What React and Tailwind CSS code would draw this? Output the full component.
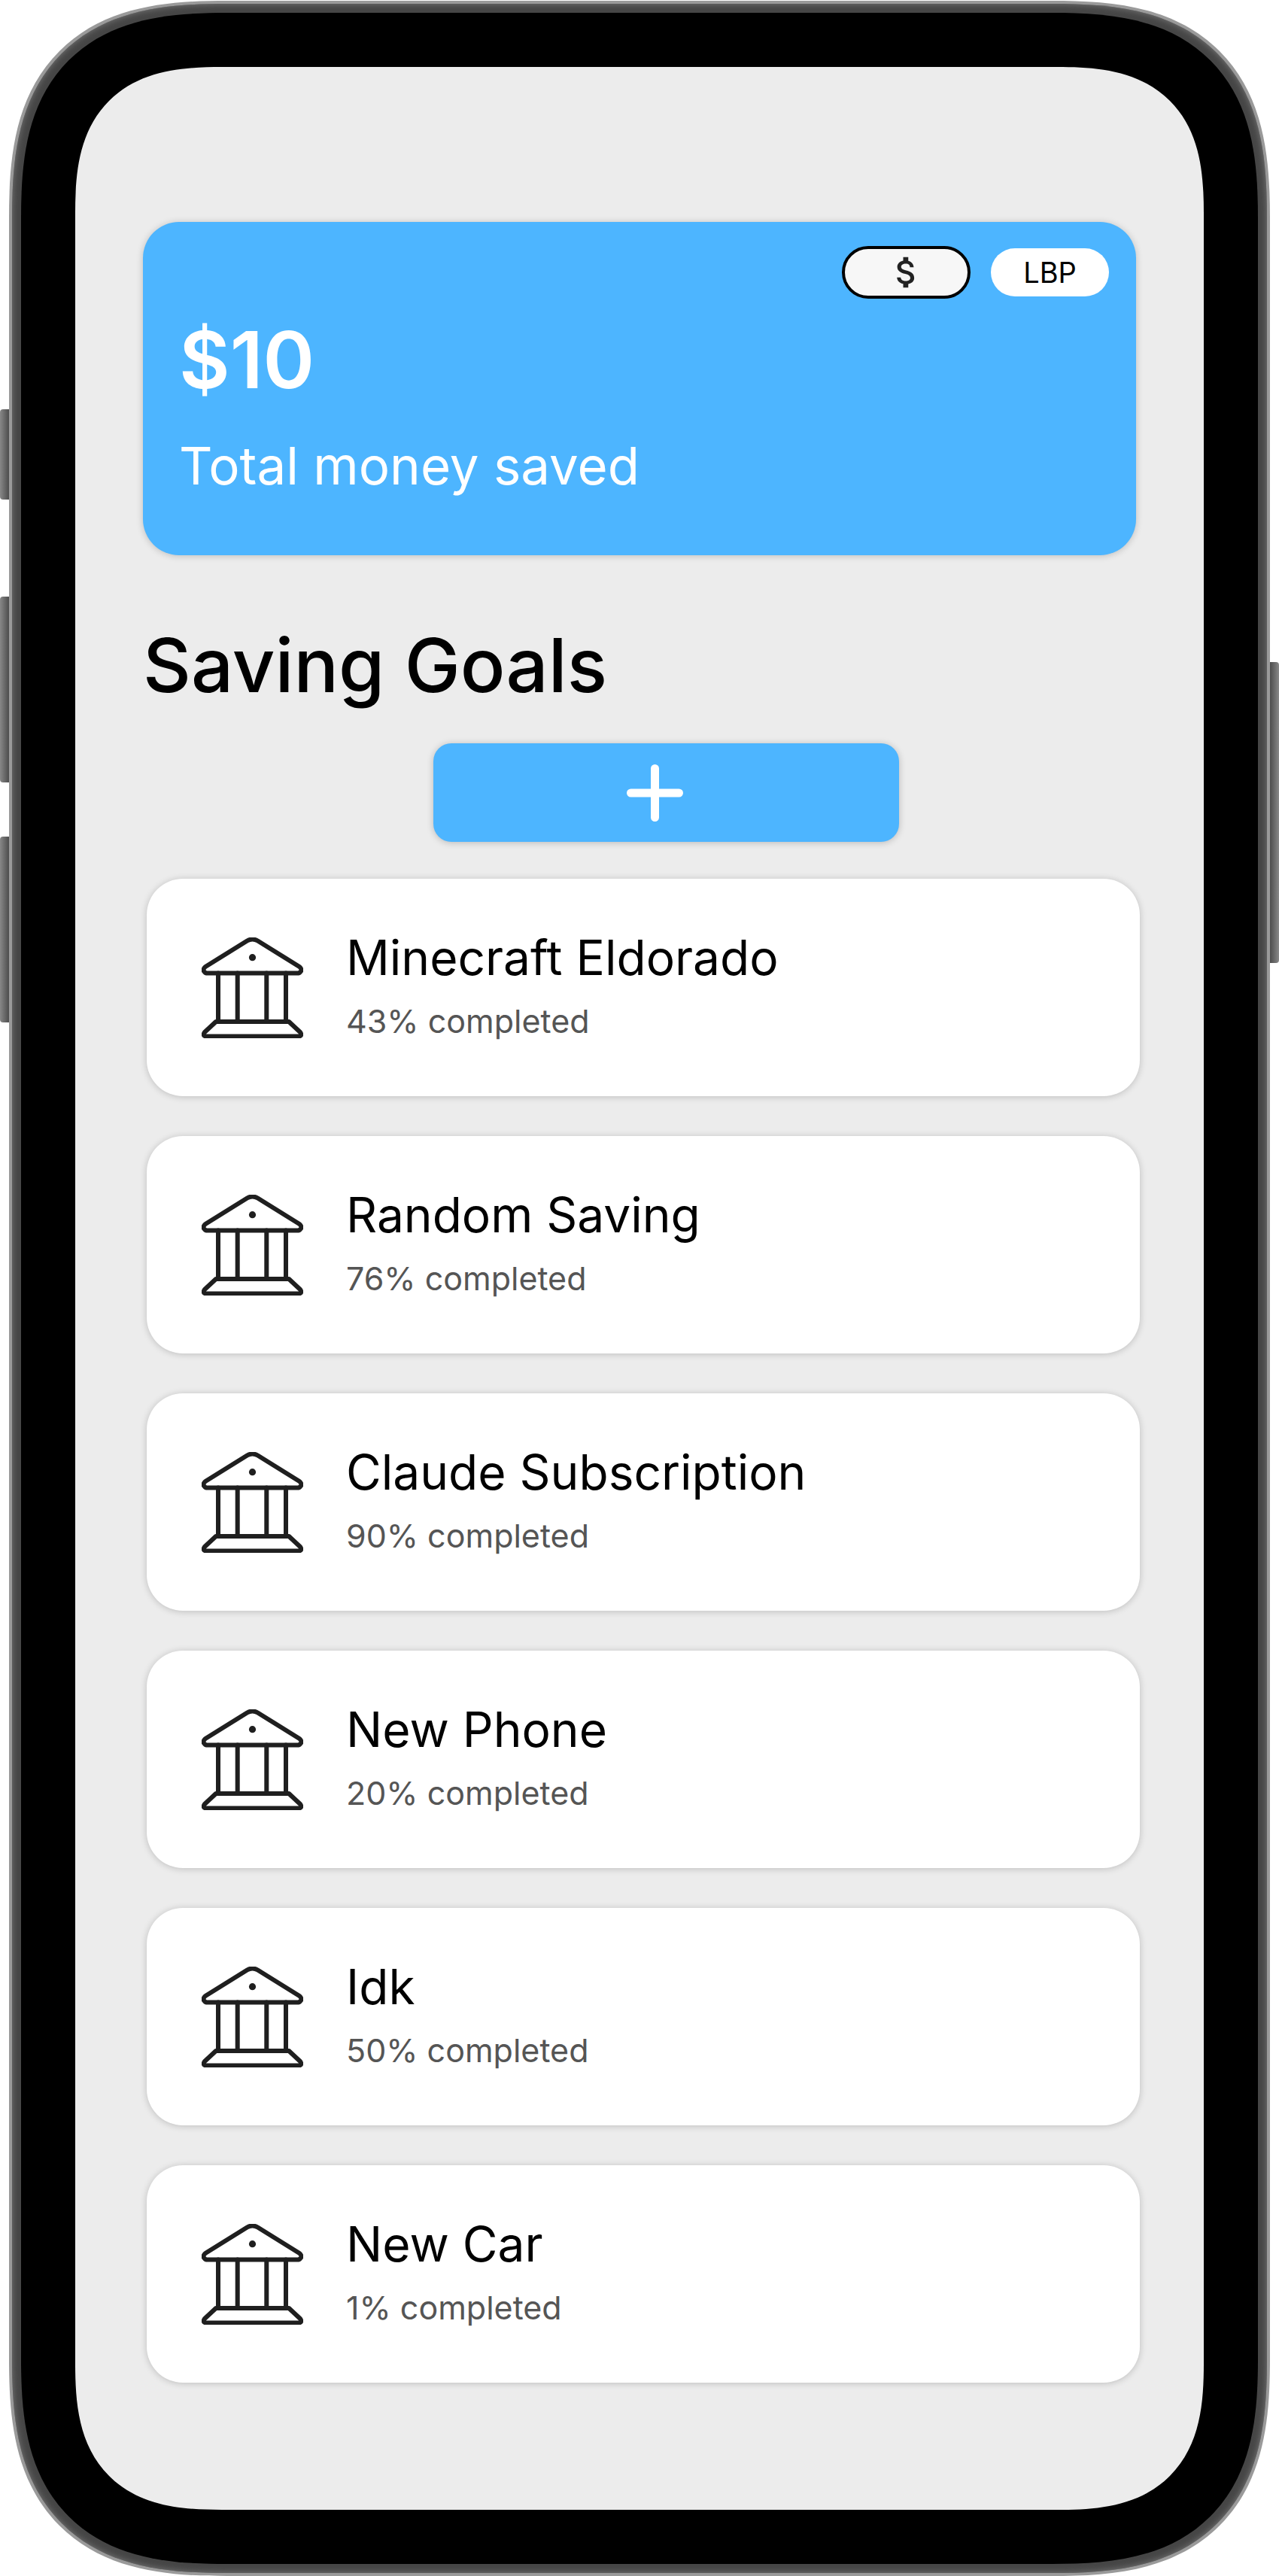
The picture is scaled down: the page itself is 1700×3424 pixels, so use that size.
import React from 'react';
import { MdAttachMoney } from 'react-icons/md';

const GOALS = [
    { name: 'Minecraft Eldorado', pct: 43 },
    { name: 'Random Saving', pct: 76 },
    { name: 'Claude Subscription', pct: 90 },
    { name: 'New Phone', pct: 20 },
    { name: 'Idk', pct: 50 },
    { name: 'New Car', pct: 1 },
];

function BankIcon() {
    return (
        <svg width="135" height="134" viewBox="0 0 135 134" fill="none" stroke="#1f1f1f" strokeWidth="6" strokeLinejoin="round" strokeLinecap="round" className="shrink-0">
            <path d="M60.5 4.5 Q67.5 0.5 74.5 4.5 L130 39 Q134.5 43 131 46 Q130 47.5 127 47.5 L8 47.5 Q5 47.5 4 46 Q0.5 43 5 39 Z" />
            <path d="M22 47.5 V112 M47.7 47.5 V112 M86.3 47.5 V112 M112 47.5 V112" />
            <path d="M19 112 L116 112 L131 126 Q134.5 131 129 131.5 L6 131.5 Q0.5 131 4 126 Z" />
            <circle cx="67.5" cy="26.7" r="4.6" fill="#1f1f1f" stroke="none" />
        </svg>
    );
}

function GoalCard({ name, pct }) {
    return (
        <div className="ml-[5px] flex h-[289px] w-[1320px] items-center rounded-[48px] bg-white pl-[73px] shadow-[0_1px_10px_rgba(0,0,0,0.2)]">
            <BankIcon />
            <div className="ml-[57px] flex flex-col pb-[8px]">
                <span className="text-[64px] font-normal leading-[78px] text-black">{name}</span>
                <span className="mt-[18px] text-[43px] font-normal leading-[54px] text-[#555555]">{pct}% completed</span>
            </div>
        </div>
    );
}

export default function App() {
    return (
        <div className="relative h-[3424px] w-[1700px] overflow-hidden bg-white font-['Inter',sans-serif]">
            {/* Side buttons */}
            <div className="absolute left-0 top-[544px] h-[120px] w-[14px] rounded-l-[4px] bg-gradient-to-r from-[#888888] to-[#444444]" />
            <div className="absolute left-0 top-[793px] h-[247px] w-[14px] rounded-l-[4px] bg-gradient-to-r from-[#888888] to-[#444444]" />
            <div className="absolute left-0 top-[1112px] h-[247px] w-[14px] rounded-l-[4px] bg-gradient-to-r from-[#888888] to-[#444444]" />
            <div className="absolute right-0 top-[880px] h-[400px] w-[14px] rounded-r-[4px] bg-gradient-to-r from-[#444444] to-[#888888]" />

            {/* Phone frame */}
            <div className="relative ml-[12px] mt-[1px] h-[3423px] w-[1676px] rounded-[290px] bg-[#9a9a9a] p-[4px] [corner-shape:superellipse(1.4)]">
                <div className="h-full w-full rounded-[286px] bg-[#464646] p-[12px] shadow-[inset_0_0_8px_#7a7a7a] [corner-shape:superellipse(1.4)]">
                    <div className="h-full w-full rounded-[274px] bg-black p-[72px] [corner-shape:superellipse(1.4)]">
                        {/* Screen */}
                        <div className="flex h-full w-full flex-col rounded-[195px] bg-[#ececec] pl-[90px] pr-[85px] pt-[206px] [corner-shape:superellipse(1.4)]">
                            {/* Balance card */}
                            <div className="flex h-[443px] w-[1320px] shrink-0 flex-col rounded-[48px] bg-[#4db5ff] pl-[49px] pr-[36px] pt-[32px] shadow-[0_1px_10px_rgba(0,0,0,0.2)]">
                                <div className="flex items-center justify-end gap-[27px]">
                                    <div className="flex h-[70px] w-[171px] items-center justify-center rounded-full border-[4px] border-black bg-[#f7f7f7] text-[#222222]">
                                        <MdAttachMoney size={54} />
                                    </div>
                                    <div className="flex h-[64px] w-[157px] items-center justify-center rounded-full bg-white text-[38px] font-normal text-black">
                                        LBP
                                    </div>
                                </div>
                                <span className="-ml-[1px] mt-[18px] text-[104px] font-semibold leading-[126px] text-white">$10</span>
                                <span className="-ml-[1px] mt-[37px] text-[69px] font-normal leading-[82px] text-white">Total money saved</span>
                            </div>

                            <h1 className="mt-[85px] text-[99px] font-medium leading-[122px] text-black">Saving Goals</h1>

                            <button className="ml-[386px] mt-[43px] flex h-[131px] w-[619px] shrink-0 items-center justify-center rounded-[24px] bg-[#4db5ff] pr-[30px] shadow-[0_1px_10px_rgba(0,0,0,0.22)]">
                                <svg width="75" height="76" viewBox="0 0 75 76" fill="none" stroke="white" strokeWidth="11" strokeLinecap="round">
                                    <path d="M37.5 5.5 V70.5 M5.5 38 H69.5" />
                                </svg>
                            </button>

                            <div className="mt-[49px] flex flex-col gap-[53px]">
                                {GOALS.map((g) => (
                                    <GoalCard key={g.name} name={g.name} pct={g.pct} />
                                ))}
                            </div>
                        </div>
                    </div>
                </div>
            </div>
        </div>
    );
}
